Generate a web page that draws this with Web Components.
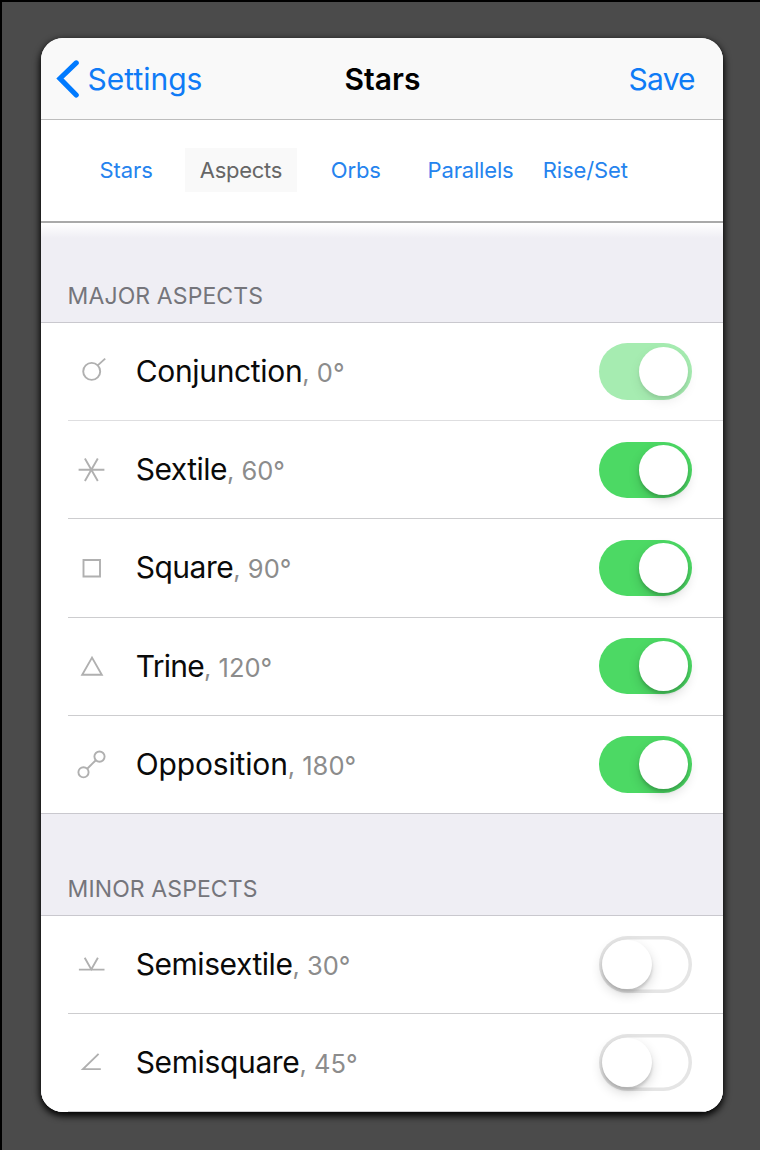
<!DOCTYPE html>
<html lang="en">
<head>
<meta charset="utf-8">
<title>Stars</title>
<style>
html, body { margin: 0; }
body { height: 1150px; overflow: hidden; background: #4b4b4b; font-family: Inter, "Liberation Sans", sans-serif; }
</style>
</head>
<body>
<settings-screen>
  <nav-bar slot="nav" back="Settings" action="Save">Stars</nav-bar>
  <tab-strip slot="tabs">
    <tab-item track="-.06">Stars</tab-item>
    <tab-item track="-.27" active>Aspects</tab-item>
    <tab-item track="-.14">Orbs</tab-item>
    <tab-item track="-.17">Parallels</tab-item>
    <tab-item track="-.11">Rise/Set</tab-item>
  </tab-strip>
  <aspect-section heading="MAJOR ASPECTS" class="first">
    <aspect-row icon="conjunction" angle="0°" track="-.33" on locked>Conjunction</aspect-row>
    <aspect-row icon="sextile" angle="60°" track="-.52" on>Sextile</aspect-row>
    <aspect-row icon="square" angle="90°" track="-.47" on>Square</aspect-row>
    <aspect-row icon="trine" angle="120°" track="-.7" on>Trine</aspect-row>
    <aspect-row icon="opposition" angle="180°" track="-.15" on last>Opposition</aspect-row>
  </aspect-section>
  <aspect-section heading="MINOR ASPECTS">
    <aspect-row icon="semisextile" angle="30°" track="-.45">Semisextile</aspect-row>
    <aspect-row icon="semisquare" angle="45°" track="-.36">Semisquare</aspect-row>
  </aspect-section>
</settings-screen>
<script>
const define = (name, render) => customElements.define(name, class extends HTMLElement {
  connectedCallback() {
    if (this.shadowRoot) return;
    const tpl = document.createElement('template');
    tpl.innerHTML = render(this);
    this.attachShadow({ mode: 'open' }).append(tpl.content.cloneNode(true));
  }
});

define('settings-screen', () => `
<style>
:host { display: block; box-sizing: border-box; height: 1150px; padding: 36px 36.6px 0 38.6px; border: solid #000; border-width: 2px 0 0 2px; }
.card { height: 1074.4px; overflow: hidden; border-radius: 22px; background: #fff; box-shadow: 0 3px 7px 1px #000; }
.list { background: linear-gradient(#fff, #efeef4 15px); }
</style>
<div class="card"><slot name="nav"></slot><slot name="tabs"></slot><div class="list"><slot></slot></div></div>`);

define('nav-bar', el => `
<style>
:host { display: grid; grid-template-columns: 1fr auto 1fr; align-items: center; box-sizing: border-box; height: 82px; padding: 0 28.6px 0 15px; background: #f9f9f9; border-bottom: 1px solid #bdbdbd; font-size: 30px; line-height: 40px; color: #000; }
.back { display: flex; align-items: center; gap: 8px; color: #0f7bf6; }
.title { font-weight: 600; padding-left: 14.5px; }
.action { justify-self: end; color: #0f7bf6; letter-spacing: -.8px; }
svg { display: block; }
</style>
<span class="back"><svg width="24" height="38" viewBox="0 0 24 38" fill="none" stroke="#007aff" stroke-width="5.2" stroke-linecap="round" stroke-linejoin="miter"><path d="M20.2 2.9 4 18.5 20.2 35"/></svg><span>${el.getAttribute('back')}</span></span>
<span class="title"><slot></slot></span>
<span class="action">${el.getAttribute('action')}</span>`);

define('tab-strip', () => `
<style>
:host { display: grid; grid-template-columns: repeat(5, 114.8px); align-items: center; box-sizing: border-box; height: 102.5px; padding: 0 0 0 28.2px; background: #fff; border-bottom: 2px solid #a9a9a9; }
</style><slot></slot>`);

define('tab-item', el => `
<style>
:host { display: block; height: 44px; margin: 0 1px; font-size: 22px; line-height: 44px; text-align: center; color: #2583ee; letter-spacing: ${el.getAttribute('track')}px; }
:host([active]) { background: #f9f9f9; color: #666; }
</style><slot></slot>`);

define('aspect-section', el => `
<style>
:host { display: block; }
h2 { display: flex; align-items: flex-end; box-sizing: border-box; height: 102px; margin: 0; padding: 0 0 12px 27px; border-bottom: 1px solid #c9c8ce; background: #efeef4; font-size: 23px; font-weight: 400; line-height: 28px; color: #75757b; letter-spacing: .1px; }
:host(.first) h2 { height: 100.5px; background: none; }
</style>
<h2>${el.getAttribute('heading')}</h2><slot></slot>`);

const icons = {
  conjunction: '<circle cx="13.7" cy="13.4" r="8.5"/><path d="M19.7 7.4 27.2.6"/>',
  sextile: '<path d="M.6 13.7H26.4M6.9 2.6 19.8 24.9M19.8 2.6 6.9 24.9"/>',
  square: '<path d="M5.5 6H22V22.5H5.5Z"/>',
  trine: '<path d="M14 5.6 4.2 22.8H23.8Z"/>',
  opposition: '<circle cx="5.5" cy="22.3" r="5.1"/><circle cx="21.5" cy="6.6" r="5.1"/><path d="M9.2 18.7 17.8 10.2"/>',
  semisextile: '<path d="M.9 18.6H26.5M6.7 6.8 13.3 18.4 19.9 6.8"/>',
  semisquare: '<path d="M20.6 4.9 5 20.1H22.8"/>'
};

define('aspect-row', el => `
<style>
:host { display: block; height: 98.2px; background: #fff; }
.row { display: flex; align-items: center; box-sizing: border-box; height: 100%; margin-left: 27.4px; padding: 0 31.9px 0 10px; border-bottom: 1px solid #cdcdcf; }
:host([locked]) .row { border-color: #dedee0; }
:host([last]) .row { margin-left: 0; padding-left: 37.4px; border-color: #c9c8ce; }
svg { display: block; flex: none; margin-right: 29.7px; overflow: visible; }
.text { flex: 1; font-size: 30px; line-height: 40px; color: #0a0a0a; padding-top: 1px; white-space: pre; }
.name { letter-spacing: ${el.getAttribute('track')}px; }
.angle { font-size: 25.5px; color: #8c8c8c; }
</style>
<div class="row">
<svg width="28" height="28" viewBox="0 0 28 28" fill="none" stroke="#b0b0b0" stroke-width="1.9">${icons[el.getAttribute('icon')]}</svg>
<div class="text"><span class="name"><slot></slot></span><span class="angle">, ${el.getAttribute('angle')}</span></div>
<toggle-switch ${el.hasAttribute('on') ? 'on' : ''} ${el.hasAttribute('locked') ? 'locked' : ''}></toggle-switch>
</div>`);

define('toggle-switch', () => `
<style>
:host { display: flex; align-items: center; box-sizing: border-box; flex: none; width: 93px; height: 56.5px; padding: 0 3.5px; border-radius: 29px; box-shadow: inset 0 0 0 3.5px #e5e5e5; }
.knob { width: 49.5px; height: 49.5px; border-radius: 50%; background: #fff; box-shadow: 0 5px 12px rgba(0,0,0,.16), 0 3px 3px rgba(0,0,0,.14); }
:host([on]) { justify-content: flex-end; background: #4cd964; box-shadow: none; }
:host([locked]) { background: #a6ecb1; }
:host([locked]) .knob { box-shadow: 0 5px 12px rgba(0,0,0,.08), 0 3px 3px rgba(0,0,0,.07); }
</style><div class="knob"></div>`);
</script>
</body>
</html>
